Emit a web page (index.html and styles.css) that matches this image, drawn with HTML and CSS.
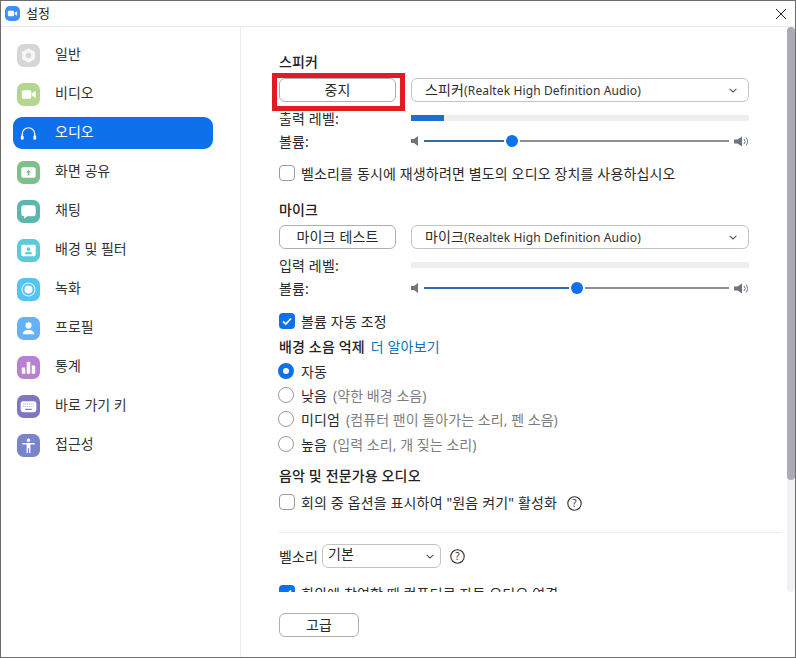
FILE: index.html
```html
<!DOCTYPE html>
<html lang="ko">
<head>
<meta charset="utf-8">
<title>설정</title>
<link rel="stylesheet" href="styles.css">
</head>
<body>
<div class="window">
  <header class="titlebar">
    <svg class="app-icon" viewBox="0 0 14 14"><rect width="14" height="14" rx="4.5" fill="#3f8df5"/><rect x="2.6" y="4.4" width="5.8" height="5.2" rx="1.2" fill="#fff"/><path d="M9 6.4 11.4 4.8v4.4L9 7.6z" fill="#fff"/></svg>
    <span class="title">설정</span>
    <svg class="close" viewBox="0 0 10 10"><path d="M0 0 10 10M10 0 0 10" stroke="#222" stroke-width="1" fill="none"/></svg>
  </header>
  <div class="body">
    <nav class="sidebar">
      <a class="nav-item"><svg class="nav-icon" viewBox="0 0 24 24"><rect width="24" height="24" rx="7" fill="#d6d6d6"/><path d="M12 5.5 17.6 8.7v6.6L12 18.5 6.4 15.3V8.7z" fill="#f6f6f6" stroke="#f6f6f6" stroke-width="2" stroke-linejoin="round"/><circle cx="12" cy="12" r="2.8" fill="#d6d6d6"/></svg><span>일반</span></a>
      <a class="nav-item"><svg class="nav-icon" viewBox="0 0 24 24"><rect width="24" height="24" rx="7" fill="#b4d78f"/><rect x="5" y="7.5" width="10" height="9" rx="2" fill="#fff"/><path d="M15.5 11 19.5 8v8l-4-3z" fill="#fff"/></svg><span>비디오</span></a>
      <a class="nav-item active"><svg class="nav-icon" viewBox="0 0 24 24"><path d="M5.500 17v-4.500a6.500 6.500 0 0 1 13 0V17" fill="none" stroke="#fff" stroke-width="1.300"/><rect x="4" y="14" width="2.900" height="4.500" rx="1.300" fill="#fff"/><rect x="17.100" y="14" width="2.900" height="4.500" rx="1.300" fill="#fff"/></svg><span>오디오</span></a>
      <a class="nav-item"><svg class="nav-icon" viewBox="0 0 24 24"><rect width="24" height="24" rx="7" fill="#7dc188"/><rect x="4.5" y="6.5" width="15" height="11" rx="2" fill="#fff"/><path d="M12 9.2 14.6 12h-1.7v3h-1.8v-3H9.4z" fill="#7dc188"/></svg><span>화면 공유</span></a>
      <a class="nav-item"><svg class="nav-icon" viewBox="0 0 24 24"><rect width="24" height="24" rx="7" fill="#5cb6ad"/><path d="M7 5.5h10A2.5 2.5 0 0 1 19.5 8v6.500A2.500 2.500 0 0 1 17 17h-6.500L7.500 19.500V17H7a2.500 2.500 0 0 1-2.500-2.500V8A2.500 2.500 0 0 1 7 5.500z" fill="#fff"/></svg><span>채팅</span></a>
      <a class="nav-item"><svg class="nav-icon" viewBox="0 0 24 24"><rect width="24" height="24" rx="7" fill="#5ccbd8"/><rect x="4.500" y="6" width="15" height="12" rx="1.500" fill="#fff"/><circle cx="12" cy="10.500" r="2" fill="#5ccbd8"/><path d="M8 16c.4-2 2-2.800 4-2.800s3.600.8 4 2.800z" fill="#5ccbd8"/></svg><span>배경 및 필터</span></a>
      <a class="nav-item"><svg class="nav-icon" viewBox="0 0 24 24"><rect width="24" height="24" rx="7" fill="#55c3f3"/><circle cx="12" cy="12" r="6.800" fill="none" stroke="#dff4fd" stroke-width="1.200"/><circle cx="12" cy="12" r="4.200" fill="#fff"/></svg><span>녹화</span></a>
      <a class="nav-item"><svg class="nav-icon" viewBox="0 0 24 24"><rect width="24" height="24" rx="7" fill="#65b1f6"/><circle cx="12" cy="8.800" r="3.200" fill="#fff"/><path d="M6 18c0-3 2.500-4.500 6-4.500s6 1.500 6 4.500z" fill="#fff"/></svg><span>프로필</span></a>
      <a class="nav-item"><svg class="nav-icon" viewBox="0 0 24 24"><rect width="24" height="24" rx="7" fill="#ba80d0"/><rect x="5" y="12" width="3.600" height="6.500" rx=".6" fill="#fff"/><rect x="10.200" y="6" width="3.600" height="12.500" rx=".6" fill="#fff"/><rect x="15.400" y="10" width="3.600" height="8.500" rx=".6" fill="#fff"/></svg><span>통계</span></a>
      <a class="nav-item"><svg class="nav-icon" viewBox="0 0 24 24"><rect width="24" height="24" rx="7" fill="#7e78c3"/><rect x="3.800" y="6.500" width="16.400" height="11.500" rx="2.500" fill="#fff"/><path d="M6.500 9.500h11M6.500 12h11" stroke="#b6b2de" stroke-width="1.200" stroke-dasharray="1.200 .9"/><path d="M8.500 15h7" stroke="#7e78c3" stroke-width="1.200"/></svg><span>바로 가기 키</span></a>
      <a class="nav-item"><svg class="nav-icon" viewBox="0 0 24 24"><rect width="24" height="24" rx="7" fill="#7985cb"/><circle cx="12" cy="6.500" r="1.800" fill="#fff"/><path d="M5.500 9.300h13v1.600h-4.500v9h-1.400v-5h-1.200v5H10v-9H5.500z" fill="#fff"/></svg><span>접근성</span></a>
    </nav>
    <main class="main">
      <div class="scroll">
        <h3 class="heading first">스피커</h3>
        <div class="row top">
          <div class="col-left">
            <button class="btn wide">중지</button>
            <span class="highlight"></span>
          </div>
          <div class="select full"><span>스피커<span class="latin">(Realtek High Definition Audio)</span></span><svg class="chev" viewBox="0 0 8 5"><path d="M.6.8 4 4 7.400.8" fill="none" stroke="#555" stroke-width="1.100"/></svg></div>
        </div>
        <div class="row line after-control">
          <label class="col-left">출력 레벨:</label>
          <div class="meter"><div class="meter-fill" style="width:33px"></div></div>
        </div>
        <div class="row line tight">
          <label class="col-left">볼륨:</label>
          <div class="slider">
            <svg class="vol-low" viewBox="0 0 8 10"><path d="M0 3h3l4-3v10L3 7H0z" fill="#6f7480"/></svg>
            <span class="track done" style="width:80px"></span><span class="thumb"></span><span class="track"></span>
            <svg class="vol-high" viewBox="0 0 15 11"><path d="M0 3.500h3.500L8 .5v10L3.500 7.500H0z" fill="#6f7480"/><path d="M10 3a3.500 3.500 0 0 1 0 5M12 1.500a6 6 0 0 1 0 8" fill="none" stroke="#6f7480" stroke-width="1"/></svg>
          </div>
        </div>
        <div class="check-row gap-14"><span class="box"></span><span>벨소리를 동시에 재생하려면 별도의 오디오 장치를 사용하십시오</span></div>

        <h3 class="heading section">마이크</h3>
        <div class="row top after-section">
          <div class="col-left"><button class="btn wide">마이크 테스트</button></div>
          <div class="select full"><span>마이크<span class="latin">(Realtek High Definition Audio)</span></span><svg class="chev" viewBox="0 0 8 5"><path d="M.6.8 4 4 7.400.8" fill="none" stroke="#555" stroke-width="1.100"/></svg></div>
        </div>
        <div class="row line after-control">
          <label class="col-left">입력 레벨:</label>
          <div class="meter"></div>
        </div>
        <div class="row line tight">
          <label class="col-left">볼륨:</label>
          <div class="slider">
            <svg class="vol-low" viewBox="0 0 8 10"><path d="M0 3h3l4-3v10L3 7H0z" fill="#6f7480"/></svg>
            <span class="track done" style="width:145px"></span><span class="thumb"></span><span class="track"></span>
            <svg class="vol-high" viewBox="0 0 15 11"><path d="M0 3.500h3.500L8 .5v10L3.500 7.500H0z" fill="#6f7480"/><path d="M10 3a3.500 3.500 0 0 1 0 5M12 1.500a6 6 0 0 1 0 8" fill="none" stroke="#6f7480" stroke-width="1"/></svg>
          </div>
        </div>
        <div class="check-row gap-15"><span class="box on"><svg viewBox="0 0 16 16"><path d="M4 8.300 6.900 11 12 5.500" fill="none" stroke="#fff" stroke-width="1.700"/></svg></span><span>볼륨 자동 조정</span></div>

        <div class="noise"><strong>배경 소음 억제</strong><a class="link">더 알아보기</a></div>
        <div class="radio-row r1"><span class="radio on"></span><span>자동</span></div>
        <div class="radio-row"><span class="radio"></span><span>낮음</span><span class="hint">(약한 배경 소음)</span></div>
        <div class="radio-row"><span class="radio"></span><span>미디엄</span><span class="hint">(컴퓨터 팬이 돌아가는 소리, 펜 소음)</span></div>
        <div class="radio-row r4"><span class="radio"></span><span>높음</span><span class="hint">(입력 소리, 개 짖는 소리)</span></div>

        <h3 class="heading music">음악 및 전문가용 오디오</h3>
        <div class="check-row gap-7"><span class="box"></span><span>회의 중 옵션을 표시하여 "원음 켜기" 활성화</span><svg class="help orig" viewBox="0 0 15 15"><circle cx="7.500" cy="7.500" r="6.700" fill="none" stroke="#333" stroke-width="1.100"/><text x="7.500" y="11" text-anchor="middle" class="help-mark">?</text></svg></div>
        <hr class="divider">
        <div class="ring-row">
          <span>벨소리</span>
          <div class="select ring"><span>기본</span><svg class="chev" viewBox="0 0 8 5"><path d="M.6.8 4 4 7.400.8" fill="none" stroke="#555" stroke-width="1.100"/></svg></div>
          <svg class="help" viewBox="0 0 15 15"><circle cx="7.500" cy="7.500" r="6.700" fill="none" stroke="#333" stroke-width="1.100"/><text x="7.500" y="11" text-anchor="middle" class="help-mark">?</text></svg>
        </div>
        <div class="check-row gap-16"><span class="box on"><svg viewBox="0 0 16 16"><path d="M4 8.300 6.900 11 12 5.500" fill="none" stroke="#fff" stroke-width="1.700"/></svg></span><span>회의에 참여할 때 컴퓨터로 자동 오디오 연결</span></div>
      </div>
      <div class="scrollbar"><div class="scrollbar-thumb"></div></div>
      <footer class="footer"><button class="btn advanced">고급</button></footer>
    </main>
  </div>
</div>
</body>
</html>
```
FILE: styles.css
```css
* { box-sizing: border-box; }
html, body { margin: 0; padding: 0; background: #fff; }
body {
  font-family: "Noto Sans", "Noto Sans CJK KR", sans-serif;
  font-size: 14px;
  letter-spacing: .15px;
  color: #2a2a2a;
}
.window {
  width: 796px;
  height: 658px;
  border: 1px solid #6d6d6d;
  display: flex;
  flex-direction: column;
  overflow: hidden;
  position: relative;
}
.titlebar {
  height: 26px;
  flex: none;
  display: flex;
  align-items: center;
  padding-left: 4px;
  border-bottom: 1px solid #e9e9e9;
}
.app-icon { width: 15px; height: 15px; }
.title { margin-left: 6px; font-size: 13px; letter-spacing: 0; color: #222; position: relative; top: -1px; }
.close { width: 10px; height: 10px; margin-left: auto; margin-right: 9px; }
.body { flex: 1; display: flex; min-height: 0; }

.sidebar {
  width: 240px;
  flex: none;
  border-right: 1px solid #ececec;
  padding: 12px 0 0 12px;
}
.nav-item {
  width: 200px;
  height: 32px;
  margin-bottom: 7px;
  padding-left: 4px;
  display: flex;
  align-items: center;
  border-radius: 9px;
  letter-spacing: 0;
  color: #333;
}
.nav-item span { margin-left: 15px; position: relative; top: -2px; }
.nav-icon { width: 23px; height: 23px; flex: none; }
.nav-item.active { background: #0e71eb; color: #fff; }

.main { flex: 1; min-width: 0; display: flex; flex-direction: column; position: relative; }
.scroll {
  height: 565px;
  flex: none;
  overflow: hidden;
  padding: 25px 13px 0 38px;
}
.heading { margin: 0; height: 20px; line-height: 20px; font-size: 14px; font-weight: 500; color: #222; }
.heading.section { margin-top: 18px; }
.heading.music { margin-top: 13px; }

.row { display: flex; gap: 15px; width: 470px; align-items: center; }
.row.top { margin-top: 6px; height: 24px; }
.row.top.after-section { margin-top: 5px; }
.row.line { height: 18px; }
.row.after-control { margin-top: 7px; }
.row.tight { margin-top: 5px; }
.col-left { width: 117px; flex: none; position: relative; }
.btn {
  font: inherit;
  letter-spacing: inherit;
  color: #2a2a2a;
  background: #fff;
  border: 1px solid #aeaeae;
  border-radius: 6px;
  height: 24px;
  padding: 0 0 4px;
  display: block;
}
.btn.wide { width: 117px; }
.highlight {
  position: absolute;
  left: -7px;
  right: -9px;
  top: -5px;
  bottom: -9px;
  border: 5px solid #e01b24;
  pointer-events: none;
}
.select {
  height: 24px;
  border: 1px solid #c4c4c4;
  border-radius: 6px;
  display: flex;
  align-items: center;
  justify-content: space-between;
  background: #fff;
}
.select > span { position: relative; top: -1px; }
.latin { font-size: 12px; letter-spacing: .12px; color: #333; }
.select.full { flex: 1; padding: 0 11px 0 13px; }
.chev { width: 8px; height: 5px; flex: none; }
.meter { flex: 1; height: 6px; background: #eeeeee; border-radius: 1px; }
.meter-fill { height: 100%; background: #1a6fd0; }
.slider { flex: 1; display: flex; align-items: center; }
.vol-low { width: 8px; height: 10px; flex: none; margin-right: 5px; }
.vol-high { width: 15px; height: 11px; flex: none; margin-left: 5px; }
.track { flex: 1; height: 2px; background: #8f8f99; }
.track.done { flex: none; background: #2e6cad; }
.thumb { width: 12px; height: 12px; border-radius: 50%; background: #0e71eb; flex: none; margin: 0 2px; }

.check-row, .radio-row { display: flex; align-items: center; height: 18px; }
.gap-14 { margin-top: 14px; }
.gap-15 { margin-top: 15px; }
.gap-16 { margin-top: 16px; }
.gap-7 { margin-top: 7px; }
.box {
  width: 16px;
  height: 16px;
  flex: none;
  margin-right: 6px;
  border: 1px solid #9a9a9a;
  border-radius: 4px;
  background: #fff;
}
.box.on { background: #0e71eb; border: 0; }
.box svg { display: block; width: 16px; height: 16px; }
.noise { margin-top: 7px; height: 20px; line-height: 20px; }
.noise strong { font-weight: 500; color: #222; }
.link { color: #0e72b5; margin-left: 6px; }
.radio-row { margin-top: 6px; }
.radio-row.r1 { margin-top: 5px; }
.radio-row.r4 { margin-top: 7px; }
.radio {
  width: 16px;
  height: 16px;
  flex: none;
  margin: 0 7px 0 -1px;
  border: 1px solid #9a9a9a;
  border-radius: 50%;
  background: #fff;
}
.radio.on { border: 5px solid #0e71eb; }
.hint { color: #7d7d7d; margin-left: 6px; letter-spacing: .05px; }
.help { width: 15px; height: 15px; flex: none; }
.help.orig { margin-left: 10px; position: relative; top: 1px; }
.help-mark { font-size: 10px; fill: #333; font-family: "Noto Sans", sans-serif; }
.divider {
  margin: 21px 0 0 0;
  width: 503px;
  height: 1px;
  border: 0;
  background: #ececec;
}
.ring-row { margin-top: 11px; display: flex; align-items: center; height: 24px; }
.select.ring { width: 119px; margin: 0 9px 0 4px; padding: 0 6px 0 5px; }
.select.ring > span { top: -3px; }

.scrollbar {
  position: absolute;
  right: 0;
  top: 0;
  width: 8px;
  height: 565px;
  background: #f1f1f6;
  border-radius: 4px;
}
.scrollbar-thumb { height: 453px; background: #abacb3; border-radius: 4px; }
.footer { padding: 21px 0 0 38px; }
.btn.advanced { width: 80px; height: 24px; }
```
